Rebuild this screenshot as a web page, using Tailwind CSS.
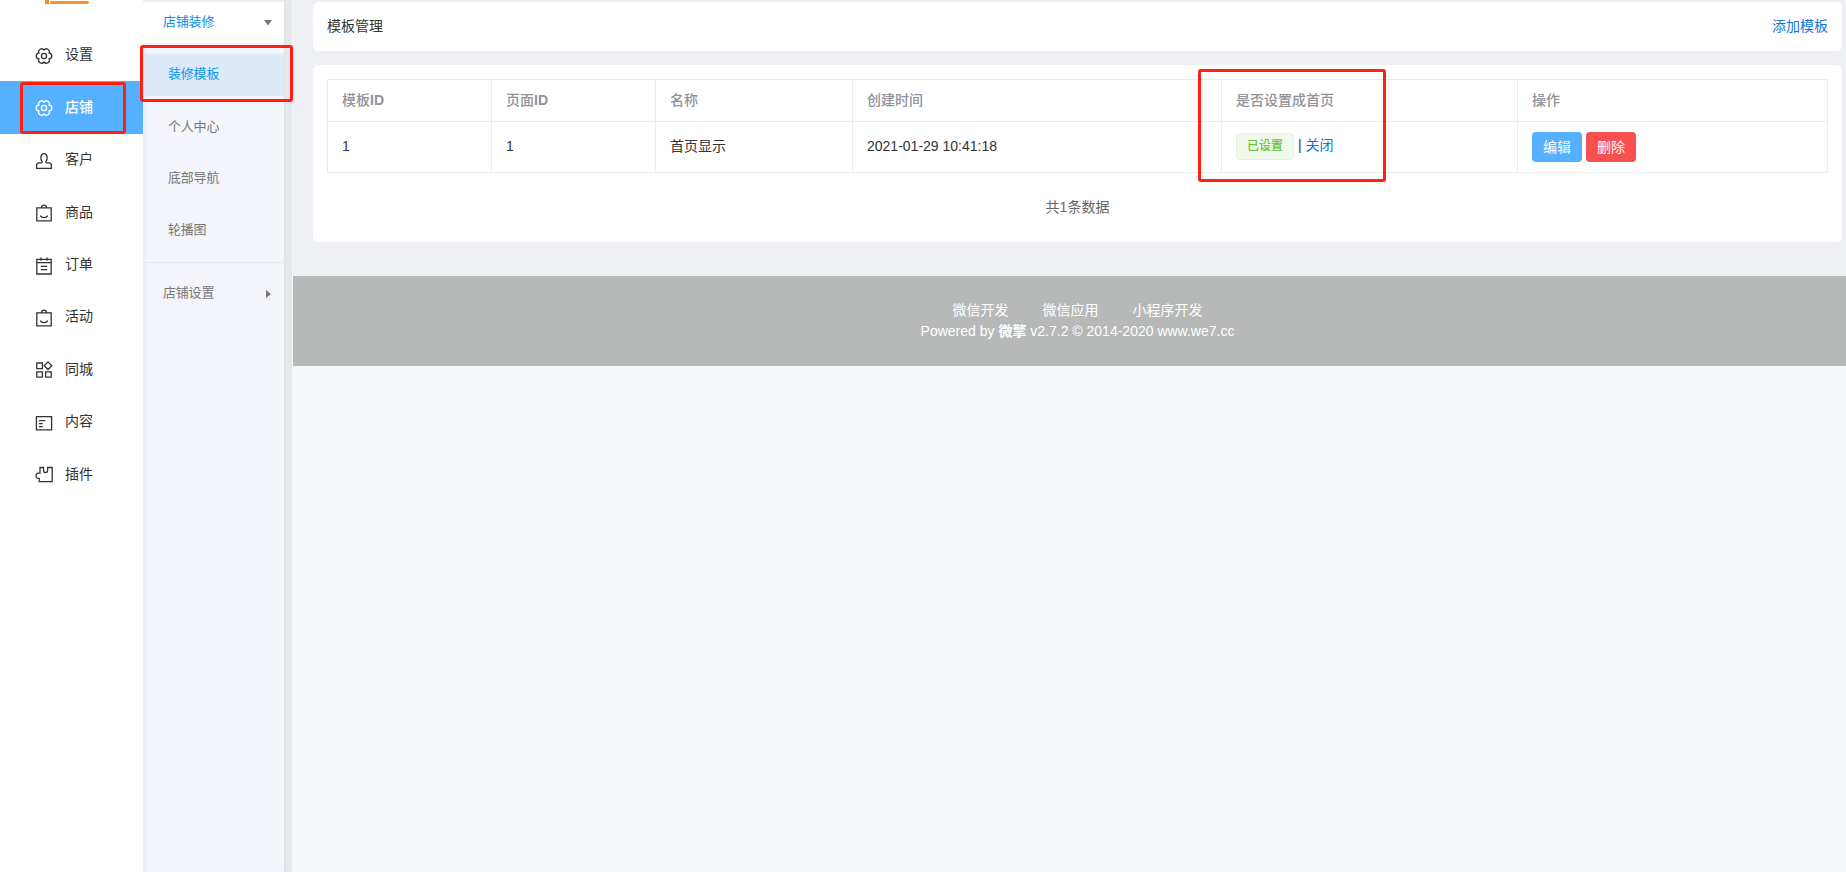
<!DOCTYPE html>
<html lang="zh-CN">
<head>
    <meta charset="UTF-8">
    <title>模板管理</title>
    <script src="https://cdn.jsdelivr.net/npm/@tailwindcss/browser@4"></script>
</head>
<body class="relative flex h-screen overflow-hidden bg-[#f6f7f9] font-['Liberation_Sans','Noto_Sans_CJK_SC',sans-serif] text-sm text-[#333]">

    <!-- icon -->
    <svg class="hidden">
        <symbol id="i-gear" viewBox="0 0 18 18">
            <path d="M9 3 A3.03 3.03 0 0 1 14.2 6 A3.03 3.03 0 0 1 14.2 12 A3.03 3.03 0 0 1 9 15 A3.03 3.03 0 0 1 3.8 12 A3.03 3.03 0 0 1 3.8 6 A3.03 3.03 0 0 1 9 3 Z"/>
            <circle cx="9" cy="9" r="2.6"/>
        </symbol>
        <symbol id="i-user" viewBox="0 0 18 18">
            <path d="M7.2 10.8 V9.6 C5.2 7.6 5 1.6 9 1.6 C13 1.6 12.8 7.6 10.8 9.6 V10.8 M7.2 10.8 H4 Q1.6 11 1.6 13.4 V16.4 H16.4 V13.4 Q16.4 11 14 10.8 H10.8"/>
        </symbol>
        <symbol id="i-bag" viewBox="0 0 18 18">
            <path d="M1.8 3.9 H16.2 V16.8 H1.8 Z M6.4 3.8 C6.6 0.3 11.4 0.3 11.6 3.8 M5.2 11.6 C6.5 14.2 11.5 14.2 12.8 11.6"/>
        </symbol>
        <symbol id="i-order" viewBox="0 0 18 18">
            <path d="M1.8 2.4 H16.2 V17 H1.8 Z M1.8 5.6 H16.2 M6 0.6 V3.8 M12 0.6 V3.8 M5.8 9.4 H12.2 M5.8 12.7 H12.2"/>
        </symbol>
        <symbol id="i-grid" viewBox="0 0 18 18">
            <path d="M1.8 2 H7.4 V7.6 H1.8 Z M1.8 10.8 H7.4 V16.2 H1.8 Z M10.6 10.8 H16.2 V16.2 H10.6 Z M13 0.9 L16.8 4.7 L13 8.5 L9.2 4.7 Z"/>
        </symbol>
        <symbol id="i-card" viewBox="0 0 18 18">
            <path d="M1.4 2.6 H16.6 V15.8 H1.4 Z M4 6.6 H10.4 M4 9.6 H7.8 M4 12.6 H7.8"/>
        </symbol>
        <symbol id="i-plugin" viewBox="0 0 18 18">
            <path d="M5 1.5 H8.6 V4.6 C8.6 7.4 12.6 7.4 12.6 4.6 V1.5 H17.2 V15.6 H4.2 V12.4 H3.4 C0.2 12.4 0.2 7.2 3.4 7.2 H5 Z"/>
        </symbol>
    </svg>

    <!-- menu utama -->
    <aside class="flex w-[143px] shrink-0 flex-col bg-white">
        <div class="flex h-[28.8px] shrink-0 items-start pl-[45px]">
            <span class="h-1 w-1 bg-[#ee8d22]"></span>
            <span class="mt-px ml-px h-[3px] w-[39px] rounded-xs bg-[#f7952a]"></span>
        </div>
        <nav id="menu_utama"></nav>
    </aside>

    <!-- submenu -->
    <aside class="w-[141px] shrink-0 border-t-2 border-[#eeeff3] bg-[#f3f5fb] text-[13px] tracking-[-0.2px] text-[#777] shadow-[inset_5px_0_4px_-3px_#e9ebf0]">
        <div class="flex h-[41px] items-center justify-between bg-white pr-3 pl-5">
            <span class="-mt-px text-[#0c8ce9]">店铺装修</span>
            <svg class="h-[6px] w-2 fill-[#777]" viewBox="0 0 8 6"><path d="M0 0 H8 L4 5.5 Z"/></svg>
        </div>
        <div class="border-b border-[#e6e7eb] pt-[11px] pb-[10px]">
            <div class="mb-[10px] flex h-[42px] items-center bg-[#dce9f8] pb-[2px] pl-[25px] text-[#0b97ea]">装修模板</div>
            <div class="mb-[10px] flex h-[42px] items-center pl-[25px]">个人中心</div>
            <div class="mb-[10px] flex h-[42px] items-center pb-[2px] pl-[25px]">底部导航</div>
            <div class="flex h-[42px] items-center pb-[2px] pl-[25px]">轮播图</div>
        </div>
        <div class="flex h-[61px] items-center justify-between pr-[13px] pl-5">
            <span class="-mt-px">店铺设置</span>
            <svg class="h-2 w-[5px] fill-[#777]" viewBox="0 0 5 8"><path d="M0 0 V8 L5 4 Z"/></svg>
        </div>
    </aside>
    <div class="w-2 shrink-0 border-l border-[#e0e1e5] bg-[#e6e7eb]"></div>

    <main class="flex min-w-0 flex-1 flex-col border-l border-[#f6f7fa]">
        <div class="h-[276px] bg-[#eeeff3] pt-[2px] pr-1 pl-5">
            <div class="flex h-[49px] items-center justify-between rounded-[5px] bg-white px-[14px] pb-[2px]">
                <span>模板管理</span>
                <a class="text-[#0e76d8]">添加模板</a>
            </div>

            <div class="mt-[14px] h-[177px] rounded-[5px] bg-white px-[14px] pt-[14px]">
                <table class="w-full table-fixed border-collapse">
                    <colgroup>
                        <col class="w-[164px]">
                        <col class="w-[164px]">
                        <col class="w-[197px]">
                        <col class="w-[369px]">
                        <col class="w-[296px]">
                        <col>
                    </colgroup>
                    <thead>
                        <tr class="h-[42px] text-left text-[#909399]">
                            <th class="border border-[#ebeced] px-[14px] pt-0 pb-[2px] font-medium">模板<b>ID</b></th>
                            <th class="border border-[#ebeced] px-[14px] pt-0 pb-[2px] font-medium">页面<b>ID</b></th>
                            <th class="border border-[#ebeced] px-[14px] pt-0 pb-[2px] font-medium">名称</th>
                            <th class="border border-[#ebeced] px-[14px] pt-0 pb-[2px] font-medium">创建时间</th>
                            <th class="border border-[#ebeced] px-[14px] pt-0 pb-[2px] font-medium">是否设置成首页</th>
                            <th class="border border-[#ebeced] px-[14px] pt-0 pb-[2px] font-medium">操作</th>
                        </tr>
                    </thead>
                    <tbody>
                        <tr class="h-[51px]">
                            <td class="border border-[#ebeced] px-[14px] pt-0 pb-[2px]">1</td>
                            <td class="border border-[#ebeced] px-[14px] pt-0 pb-[2px]">1</td>
                            <td class="border border-[#ebeced] px-[14px] pt-0 pb-[2px]">首页显示</td>
                            <td class="border border-[#ebeced] px-[14px] pt-0 pb-[2px]">2021-01-29 10:41:18</td>
                            <td class="border border-[#ebeced] px-[14px] pt-0 pb-[2px]">
                                <div class="flex items-center">
                                    <span class="flex h-[27px] w-[58px] items-center justify-center rounded border border-[#e1f3d8] bg-[#f0f9eb] text-xs font-medium text-[#67c23a]">已设置</span>
                                    <span class="-mt-[2px] ml-1 whitespace-pre">| <a class="text-[#0e76d8]">关闭</a></span>
                                </div>
                            </td>
                            <td class="border border-[#ebeced] px-[14px] py-0">
                                <div class="flex gap-1 text-white">
                                    <a class="flex h-[30px] w-[50px] items-center justify-center rounded bg-[#55b1ff]">编辑</a>
                                    <a class="flex h-[30px] w-[50px] items-center justify-center rounded bg-[#f75050]">删除</a>
                                </div>
                            </td>
                        </tr>
                    </tbody>
                </table>
                <p class="mt-6 text-center text-[#666]">共1条数据</p>
            </div>
        </div>

        <footer class="h-[90px] bg-[#b7b9b8] pt-6 pl-4 text-center leading-[21px] text-white">
            <div class="flex justify-center gap-[34px]">
                <a>微信开发</a>
                <a>微信应用</a>
                <a>小程序开发</a>
            </div>
            <p>Powered by <b>微擎</b> v2.7.2 © 2014-2020 www.we7.cc</p>
        </footer>
    </main>

    <!-- kotak penanda -->
    <div class="absolute top-[82px] left-5 h-[52px] w-[106px] rounded-[3px] border-3 border-[#ff1f14]"></div>
    <div class="absolute top-[45px] left-[140px] h-[57px] w-[153px] rounded-[3px] border-3 border-[#ff1f14]"></div>
    <div class="absolute top-[69px] left-[1198px] h-[113px] w-[188px] rounded-[3px] border-3 border-[#ff1f14]"></div>

<script>
const menu = [
    { icon: 'gear', judul: '设置' },
    { icon: 'gear', judul: '店铺', aktif: true },
    { icon: 'user', judul: '客户' },
    { icon: 'bag', judul: '商品' },
    { icon: 'order', judul: '订单' },
    { icon: 'bag', judul: '活动' },
    { icon: 'grid', judul: '同城' },
    { icon: 'card', judul: '内容' },
    { icon: 'plugin', judul: '插件' }
];

document.getElementById('menu_utama').innerHTML = menu.map(item => `
    <a class="flex h-[52.4px] items-center gap-3 pl-[35px] ${item.aktif ? 'bg-[#55b1ff] font-medium text-white' : 'text-[#333]'}">
        <svg class="mt-[2px] size-[18px] fill-none stroke-current stroke-[1.3]"><use href="#i-${item.icon}"/></svg>
        <span class="-mt-px">${item.judul}</span>
    </a>
`).join('');
</script>
</body>
</html>
